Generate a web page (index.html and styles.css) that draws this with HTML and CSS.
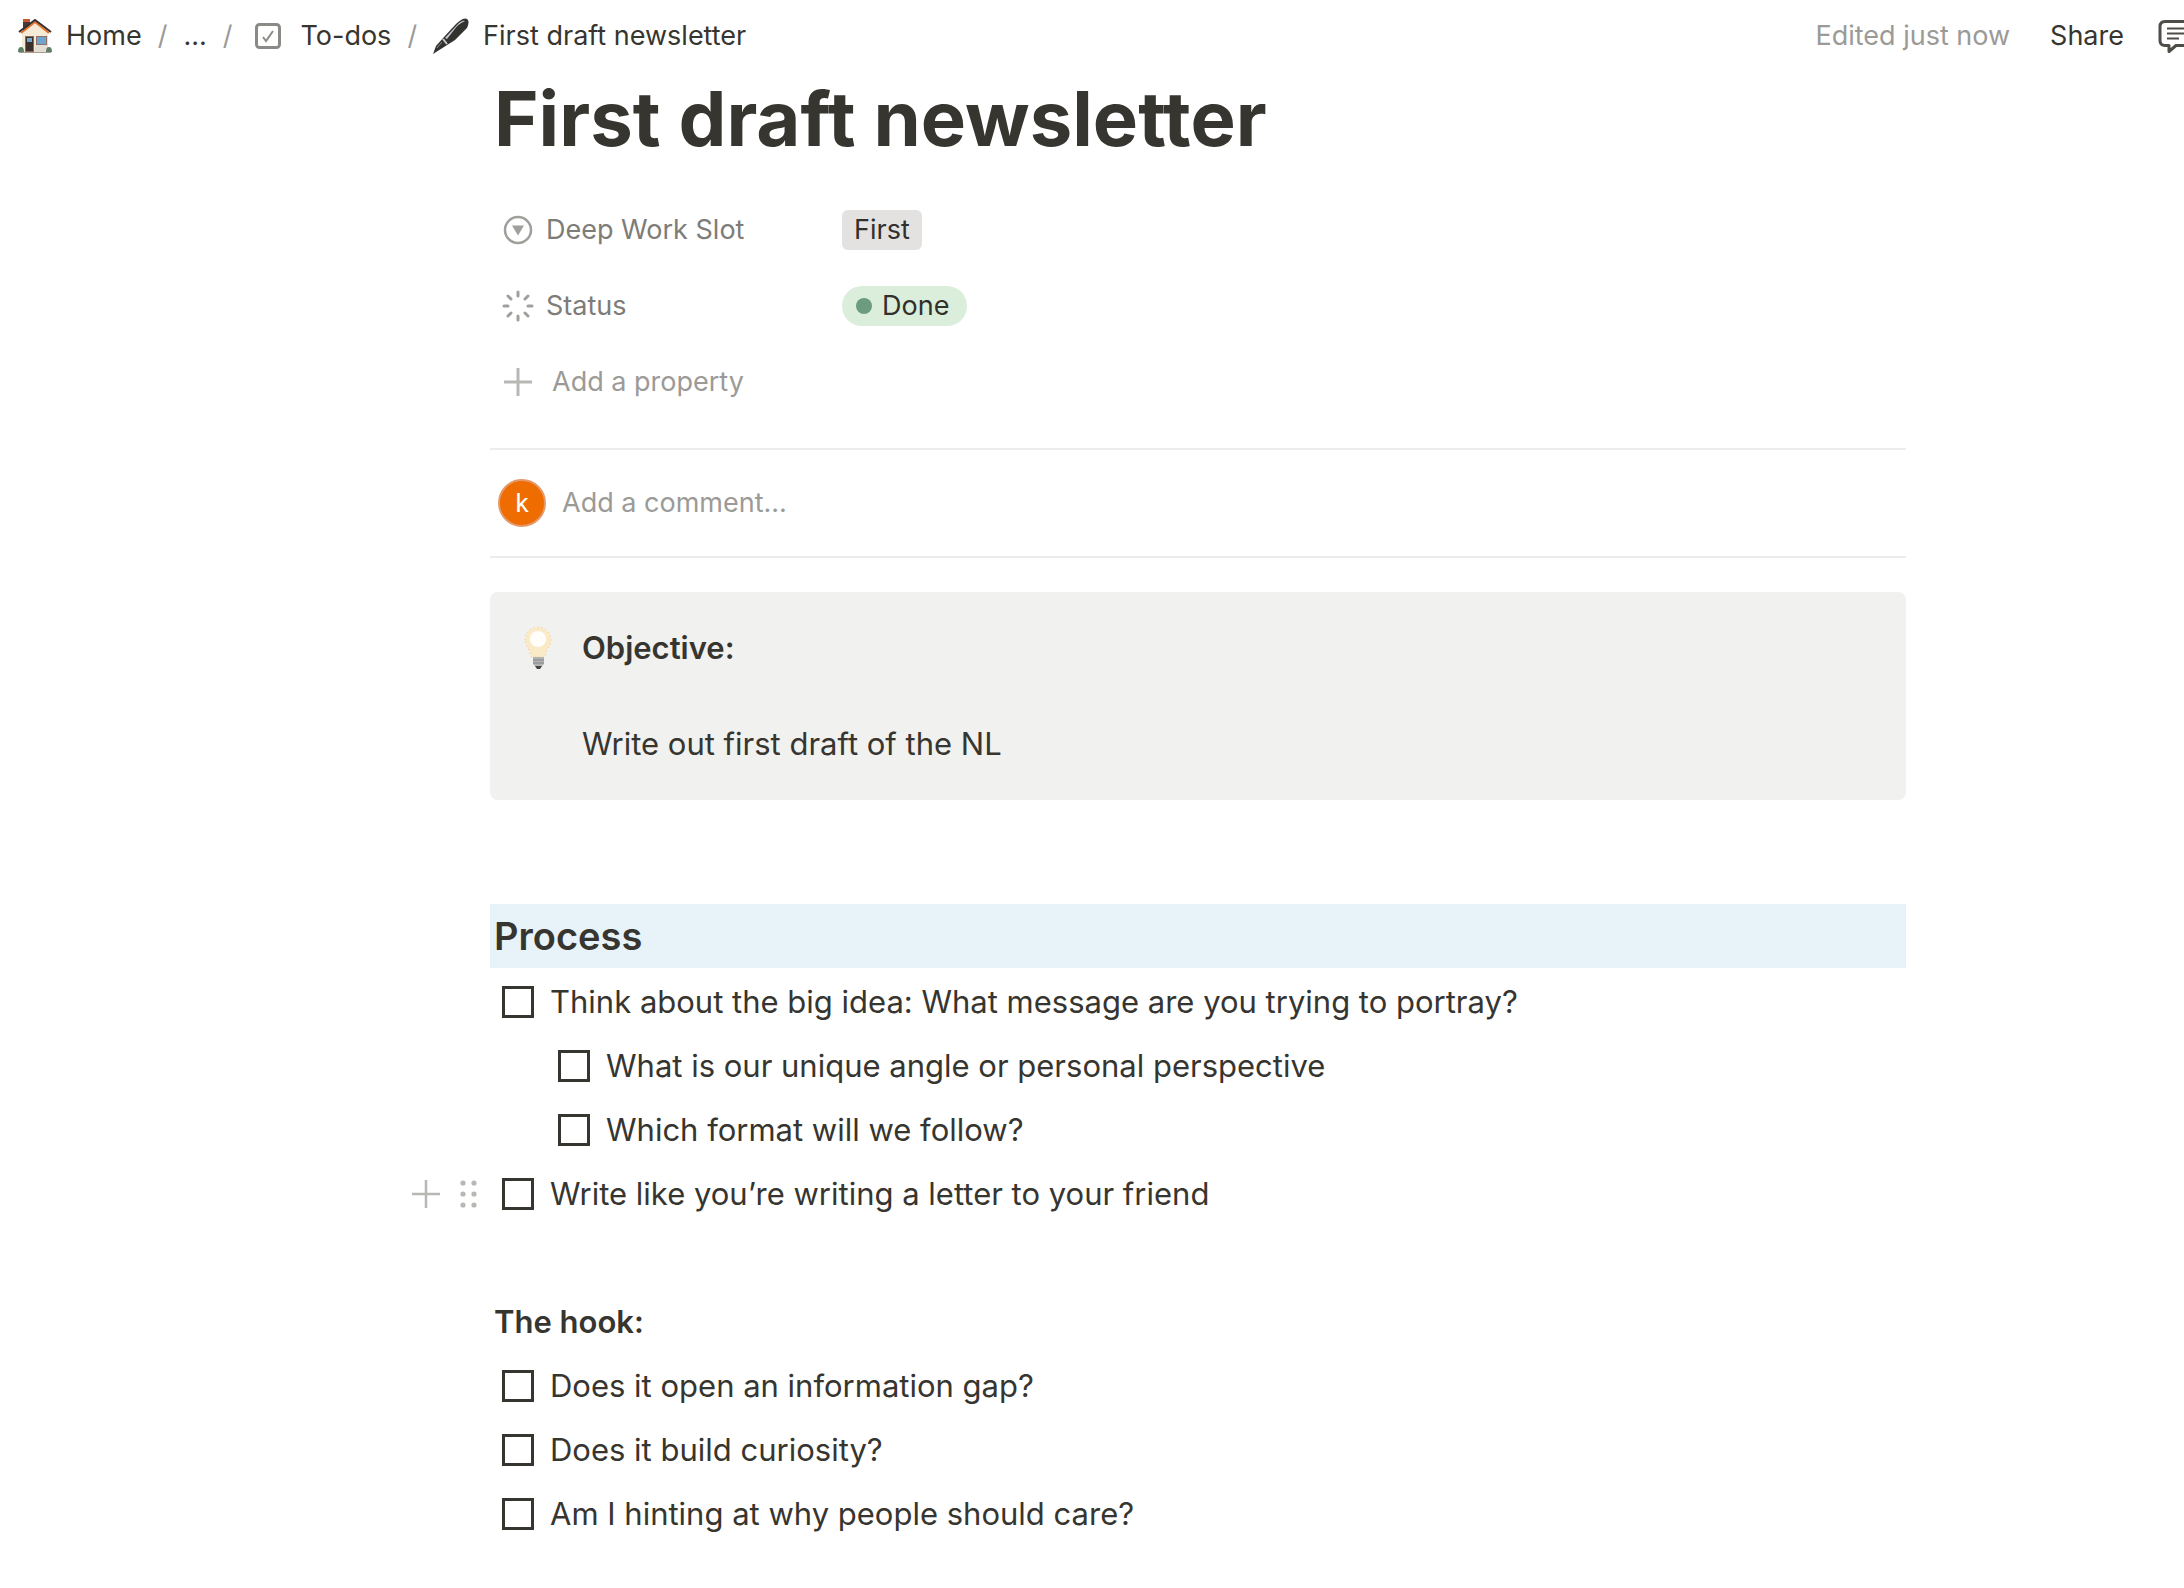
FILE: index.html
```html
<!DOCTYPE html>
<html lang="en">
<head>
    <meta charset="UTF-8">
    <title>First draft newsletter</title>
    <link rel="stylesheet" href="styles.css">
</head>
<body>
<header class="topbar">
    <nav class="breadcrumb">
        <a href="#home">
            <svg class="icon" width="34" height="34" viewBox="0 0 34 34">
                <rect x="5" y="1" width="7" height="11" fill="#4a3a36"/>
                <rect x="5" y="0" width="7" height="3" fill="#c65a33"/>
                <path d="M4 13 17 3l13 10v20H4z" fill="#f4ead6"/>
                <path d="M17 33h13V16l-13 12z" fill="#e3ddd5"/>
                <path d="M3 14 17 3l14 11" fill="none" stroke="#e8702a" stroke-width="2"/>
                <path d="M1 13 17 1l16 12" fill="none" stroke="#33302f" stroke-width="2"/>
                <rect x="7" y="17" width="9" height="16" fill="#8a6656"/>
                <rect x="8" y="18" width="7" height="14" fill="#3c302d"/>
                <rect x="9" y="19" width="5" height="4" fill="#6fa8cf"/>
                <rect x="18" y="17" width="11" height="9" fill="#8f6f66"/>
                <rect x="19" y="18" width="9" height="7" fill="#6ba6d0"/>
                <path d="M0 33q0-5 3-5t3 5zM28 33q0-5 3-5t3 5z" fill="#5d7f69"/>
                <path d="M1 33.500h32" stroke="#a99c90"/>
            </svg>
            Home
        </a>
        <span class="slash">/</span>
        <a href="#more">...</a>
        <span class="slash">/</span>
        <a href="#todos" class="todos">
            <svg class="icon" width="28" height="28" viewBox="0 0 28 28" fill="none" stroke="#8b8a86">
                <rect x="2.500" y="2.500" width="23" height="23" rx="3" stroke-width="3"/>
                <path d="m9 15 3 4 7-10" stroke-width="2"/>
            </svg>
            To-dos
        </a>
        <span class="slash">/</span>
        <a href="#draft">
            <svg class="icon" width="36" height="36" viewBox="0 0 36 36">
                <path d="M0 36 3 28 11 19 23 6Q31-1 34 1t0 9L22 22 11 29z" fill="#33322f"/>
                <path d="M12 20 24 7q5-5 8-4-7 3-11 9l-7 9z" fill="#c3c7cd"/>
                <path d="m10 21 4 5" stroke="#c9cbd0" stroke-width="2"/>
                <path d="m4 30 5-6" stroke="#8d8f94"/>
            </svg>
            First draft newsletter
        </a>
    </nav>
    <div class="actions">
        <span class="edited">Edited just now</span>
        <button class="share">Share</button>
        <button class="comments" aria-label="Comments">
            <svg width="42" height="36" viewBox="0 0 42 36" fill="none" stroke="#4f4d48" stroke-linejoin="round">
                <path d="M7 3.500h28q5 0 5 5v14q0 5-5 5H18l-7 6v-6H7q-5 0-5-5v-14q0-5 5-5z" stroke-width="3"/>
                <path d="M9 10.500h24M9 15.500h24M9 20.500h12" stroke-width="2"/>
            </svg>
        </button>
    </div>
</header>

<main class="page">
    <h1>First draft newsletter</h1>

    <dl class="properties">
        <div class="property">
            <dt>
                <svg width="32" height="32" viewBox="0 0 32 32" fill="none" stroke="#a09f9b">
                    <circle cx="16" cy="16" r="13" stroke-width="2.500"/>
                    <path d="M10 11.500h12l-6 10z" fill="#a09f9b" stroke="none"/>
                </svg>
                Deep Work Slot
            </dt>
            <dd><span class="tag">First</span></dd>
        </div>
        <div class="property">
            <dt>
                <svg width="32" height="32" viewBox="0 0 32 32" stroke="#a09f9b" stroke-width="3" stroke-linecap="round">
                    <path d="M16 2v4M16 26v4M2 16h4M26 16h4M6 6l3 3M23 23l3 3M6 26l3-3M23 9l3-3"/>
                </svg>
                Status
            </dt>
            <dd><span class="tag status">Done</span></dd>
        </div>
    </dl>
    <button class="add-property">
        <svg width="32" height="32" viewBox="0 0 32 32" stroke="#b8b7b4" stroke-width="3">
            <path d="M16 2v28M2 16h28"/>
        </svg>
        Add a property
    </button>

    <div class="comment">
        <span class="avatar">k</span>
        <input type="text" placeholder="Add a comment..." aria-label="Add a comment">
    </div>

    <section class="callout">
        <svg width="28" height="44" viewBox="0 0 28 44">
            <path d="M1 14a13 13 0 0 1 26 0c0 6-5 9-6 17H7C6 23 1 20 1 14z" fill="#faeac8"/>
            <path d="M1 14a13 13 0 0 1 26 0c0 6-5 9-6 17H7C6 23 1 20 1 14z" fill="none" stroke="#efc79f" stroke-dasharray="1 3"/>
            <circle cx="14" cy="13" r="8" fill="#fffefb"/>
            <path d="M9 31h11v7l-3 3h-5l-3-3z" fill="#b3b3b3"/>
            <path d="M9 34h11M9 37h11" stroke="#858585"/>
            <path d="M11 40h7l-2 3h-3z" fill="#444"/>
        </svg>
        <div>
            <p><strong>Objective:</strong></p>
            <p class="gap">Write out first draft of the NL</p>
        </div>
    </section>

    <h2>Process</h2>
    <ul class="todos-list">
        <li>
            <label><input type="checkbox">Think about the big idea: What message are you trying to portray?</label>
            <ul>
                <li><label><input type="checkbox">What is our unique angle or personal perspective</label></li>
                <li><label><input type="checkbox">Which format will we follow?</label></li>
            </ul>
        </li>
        <li class="hovered">
            <div class="handles">
                <button aria-label="Add block">
                    <svg width="28" height="28" viewBox="0 0 28 28" stroke="#b8b7b4" stroke-width="2.500">
                        <path d="M14 0v28M0 14h28"/>
                    </svg>
                </button>
                <button aria-label="Drag block">
                    <svg width="20" height="28" viewBox="0 0 20 28" fill="#b8b7b4">
                        <circle cx="5" cy="3" r="2.600"/><circle cx="16" cy="3" r="2.600"/>
                        <circle cx="5" cy="14" r="2.600"/><circle cx="16" cy="14" r="2.600"/>
                        <circle cx="5" cy="25" r="2.600"/><circle cx="16" cy="25" r="2.600"/>
                    </svg>
                </button>
            </div>
            <label><input type="checkbox">Write like you’re writing a letter to your friend</label>
        </li>
    </ul>

    <h3>The hook:</h3>
    <ul class="todos-list">
        <li><label><input type="checkbox">Does it open an information gap?</label></li>
        <li><label><input type="checkbox">Does it build curiosity?</label></li>
        <li><label><input type="checkbox">Am I hinting at why people should care?</label></li>
    </ul>
</main>
</body>
</html>
```

FILE: styles.css
```css
* {
    box-sizing: border-box;
    padding: 0;
    margin: 0;
}

body {
    background: white;
    color: #37352f;
    font-family: Inter, "Liberation Sans", sans-serif;
    font-size: 31px;
    line-height: 48px;
    overflow-x: hidden;
}

button, input {
    font: inherit;
    color: inherit;
    background: none;
    border: none;
}

svg {
    display: block;
    flex: none;
}

ul {
    list-style: none;
}

.topbar {
    display: flex;
    justify-content: space-between;
    height: 72px;
    padding-left: 18px;
    font-size: 27px;
    white-space: nowrap;
    overflow: hidden;
}

.breadcrumb, .actions {
    display: flex;
    align-items: center;
}

.breadcrumb {
    gap: 16px;
}

.breadcrumb a {
    display: flex;
    align-items: center;
    gap: 14px;
    color: inherit;
    text-decoration: none;
}

.breadcrumb .todos {
    gap: 18px;
    padding-left: 6px;
}

.slash {
    color: #9b9a97;
}

.edited {
    color: #9b9a97;
}

.share {
    margin: 0 34px 0 40px;
}

/* the comments button runs off the right edge */
.comments {
    margin-right: -16px;
}

.page {
    margin: 0 278px 0 490px;
}

h1 {
    padding: 0 4px;
    font-size: 76px;
    line-height: 92px;
}

.properties, .add-property {
    font-size: 27px;
}

.properties {
    margin-top: 28px;
}

.property, .add-property {
    display: flex;
    align-items: center;
    height: 76px;
    padding-left: 12px;
}

.property dt {
    display: flex;
    align-items: center;
    gap: 12px;
    width: 340px;
    color: #7d7c78;
}

.tag {
    display: flex;
    align-items: center;
    height: 40px;
    padding: 0 12px;
    border-radius: 6px;
    background: #e3e2e0;
    color: #32302c;
}

.status {
    gap: 10px;
    padding: 0 18px 0 14px;
    border-radius: 20px;
    background: #dbeddb;
}

.status::before {
    content: "";
    width: 16px;
    height: 16px;
    border-radius: 50%;
    background: #6c9b7d;
}

.add-property {
    gap: 18px;
    color: #9b9a97;
}

.comment {
    display: flex;
    align-items: center;
    gap: 16px;
    height: 110px;
    margin-top: 28px;
    padding: 0 8px;
    border-top: 2px solid #ececeb;
    border-bottom: 2px solid #ececeb;
    font-size: 27px;
}

.comment input {
    flex: 1;
}

.comment input::placeholder {
    color: #9b9a97;
}

.avatar {
    width: 48px;
    height: 48px;
    border: 2px solid #e59a6c;
    border-radius: 50%;
    background: #ef6c00;
    color: white;
    font-family: Roboto, sans-serif;
    font-size: 26px;
    line-height: 44px;
    text-align: center;
}

.callout {
    display: flex;
    gap: 30px;
    margin: 34px 0 104px;
    padding: 32px 32px 32px 34px;
    border-radius: 8px;
    background: #f1f1ef;
}

.callout svg {
    margin-top: 2px;
}

.callout .gap {
    margin-top: 48px;
}

h2 {
    margin-bottom: 2px;
    padding: 8px 4px;
    background: #e7f3f8;
    font-size: 38px;
    font-weight: 600;
}

h3 {
    margin-top: 64px;
    padding: 8px 4px;
    font-size: 31px;
    font-weight: 600;
}

strong {
    font-weight: 600;
}

.todos-list ul {
    padding-left: 56px;
}

.todos-list label {
    display: flex;
    align-items: center;
    gap: 16px;
    height: 64px;
    padding-left: 12px;
}

.todos-list input {
    appearance: none;
    width: 32px;
    height: 32px;
    border: 3px solid #37352f;
}

.hovered {
    position: relative;
}

.handles {
    position: absolute;
    right: 100%;
    display: flex;
    align-items: center;
    gap: 18px;
    height: 64px;
    padding-right: 12px;
}
```
